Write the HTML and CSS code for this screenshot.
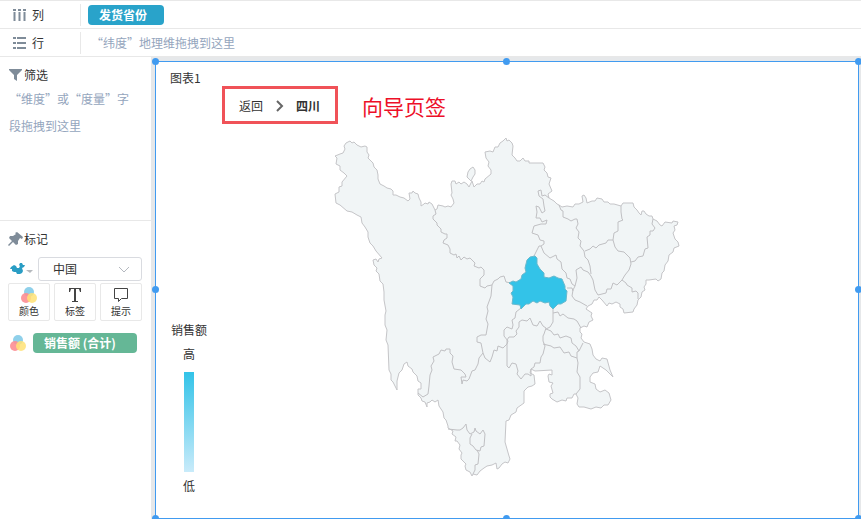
FILE: index.html
```html
<!DOCTYPE html>
<html lang="zh-CN">
<head>
  <meta charset="UTF-8" />
  <meta name="viewport" content="width=device-width, initial-scale=1.0" />
  <title>图表1</title>
  <link rel="stylesheet" href="styles.css">
</head>
<body>
  <header class="shelves">
    <div class="shelf">
      <div class="shelf-label">
        <svg class="shelf-icon" width="14" height="14" viewBox="0 0 14 14" fill="#7f8c99">
          <path d="M0 1h3v2H0zM5 1h3v2H5zM10 1h3v2h-3zM0.500 4h2v9h-2zM5.500 4h2v9h-2zM10.500 4h2v9h-2z"/>
        </svg>
        <span>列</span>
      </div>
      <div class="shelf-drop">
        <button type="button" class="pill pill-blue">发货省份</button>
      </div>
    </div>
    <div class="shelf">
      <div class="shelf-label">
        <svg class="shelf-icon" width="14" height="14" viewBox="0 0 14 14" fill="#7f8c99">
          <path d="M0 1h3v2H0zM0 6h3v2H0zM0 11h3v2H0zM4 1h9v2H4zM4 6h9v2H4zM4 11h9v2H4z"/>
        </svg>
        <span>行</span>
      </div>
      <div class="shelf-drop">
        <span class="placeholder">“纬度”地理维拖拽到这里</span>
      </div>
    </div>
  </header>

  <div class="workspace">
    <aside class="sidebar">
      <section class="filters">
        <h2 class="panel-title">
          <svg width="15" height="14" viewBox="0 0 15 14" fill="#7f8c99"><path d="M1 1h13v1L9 7v6l-3-2V7L1 2z"/></svg>
          <span>筛选</span>
        </h2>
        <p class="placeholder filter-drop">“维度”或“度量”字段拖拽到这里</p>
      </section>

      <section class="marks">
        <h2 class="panel-title">
          <svg width="15" height="14" viewBox="0 0 15 14" fill="#7f8c99"><path d="M9 0l6 5-1 2-2-1-2 3 0 3-2 1-3-3-4 4-1-1 4-4-3-3 1-2 3 0 3-2-1-1z"/></svg>
          <span>标记</span>
        </h2>

        <div class="mark-type">
          <button type="button" class="map-toggle" aria-label="地图类型">
            <svg width="24" height="14" viewBox="0 0 24 14">
              <path fill="#2a9dc4" d="M1 5l3-2 2 1 1 2 2 0 1-2-1-1 1-2 2 0 1 2 2 0-1 2-2 1 1 3-1 2-2 1-1 0-2 0-1-2-2 0-2-1 0-2-2 0z"/>
              <path fill="#b5b9be" d="M16 8h7l-3 3z"/>
            </svg>
          </button>
          <div class="select-box">
            <select aria-label="地图范围">
              <option>中国</option>
            </select>
            <svg class="select-arrow" width="12" height="8" viewBox="0 0 12 8" fill="none" stroke="#b4b8bf"><path d="M1 1l5 5 5-5"/></svg>
          </div>
        </div>

        <div class="mark-buttons">
          <button type="button">
            <svg width="18" height="18" viewBox="0 0 18 18">
              <circle cx="9" cy="6" r="5" fill="#8fd0ea"/>
              <circle cx="6" cy="12" r="5" fill="#fc8d92" fill-opacity=".9"/>
              <circle cx="12" cy="12" r="5" fill="#ffe275" fill-opacity=".85"/>
            </svg>
            <span>颜色</span>
          </button>
          <button type="button">
            <svg width="18" height="18" viewBox="0 0 18 18" fill="#444"><path d="M3 2h12v4h-1l-1-3h-3v12l2 0v1H6v-1l2 0V3H5L4 6H3z"/></svg>
            <span>标签</span>
          </button>
          <button type="button">
            <svg width="18" height="18" viewBox="0 0 18 18" fill="none" stroke="#444" stroke-linejoin="round"><path d="M2.500 2.500h13v10h-6l-3 3v-3h-4z"/></svg>
            <span>提示</span>
          </button>
        </div>

        <div class="mark-field">
          <svg width="18" height="18" viewBox="0 0 18 18">
            <circle cx="9" cy="6" r="5" fill="#8fd0ea"/>
            <circle cx="6" cy="12" r="5" fill="#fc8d92" fill-opacity=".9"/>
            <circle cx="12" cy="12" r="5" fill="#ffe275" fill-opacity=".85"/>
          </svg>
          <button type="button" class="pill pill-green">销售额 (合计)</button>
        </div>
      </section>
    </aside>

    <main class="canvas">
      <div class="chart">
        <h1 class="chart-title">图表1</h1>
        <div class="guide">
          <nav class="breadcrumb">
            <a href="#">返回</a>
            <svg width="9" height="12" viewBox="0 0 9 12" fill="none" stroke="#666" stroke-width="2"><path d="M2 1l5 5-5 5"/></svg>
            <strong>四川</strong>
          </nav>
          <span class="guide-note">向导页签</span>
        </div>

        <div class="plot">
          <div class="legend">
            <span class="legend-title">销售额</span>
            <span>高</span>
            <div class="legend-bar"></div>
            <span>低</span>
          </div>

          <svg class="map" viewBox="325 130 365 355" role="img" aria-label="四川">
            <!-- province outline -->
            <path class="area" d="M346 143L348 142 350 141 352 143 354 142 357 145 361 147 365 146 367 147 367 152 369 155 368 158 371 161 373 163 374 167 377 170 378 175 378 179 380 184 384 186 387 188 391 189 393 191 393 195 396 195 400 197 404 198 408 201 410 199 409 193 412 193 413 191 415 193 418 194 419 198 421 202 421 206 424 204 425 203 428 204 429 202 432 204 435 210 437 209 438 205 443 206 445 207 448 206 451 207 454 203 453 199 451 195 452 193 451 184 452 181 455 181 456 184 459 182 461 184 464 182 467 184 469 187 472 181 474 187 477 184 480 184 482 181 484 182 485 179 491 174 491 170 488 166 489 162 486 158 485 152 490 151 493 152 495 147 498 147 500 143 503 141 506 138 507 141 509 140 512 143 513 146 512 155 515 158 517 161 520 161 523 158 525 161 529 161 529 163 543 163 545 167 544 170 547 173 548 177 551 178 549 184 552 191 548 194 549 198 554 201 557 204 559 205 562 207 567 206 573 207 575 204 579 204 583 202 582 196 584 195 586 198 587 203 592 201 595 201 597 198 602 199 604 202 608 202 610 204 614 204 621 206 623 203 633 203 634 207 637 210 639 213 641 215 642 211 644 211 646 214 649 216 652 216 653 219 657 221 660 225 662 226 665 222 672 223 673 221 678 222 677 225 674 226 675 230 673 233 675 239 678 242 679 246 674 248 673 252 669 255 668 261 665 265 664 271 662 273 661 279 658 281 656 279 649 280 646 280 646 284 644 287 645 290 642 292 641 297 638 300 637 305 634 309 633 312 624 313 623 309 620 307 620 304 616 302 612 304 609 303 607 306 602 300 599 297 597 300 594 300 592 304 588 306 586 309 592 313 591 316 593 320 589 322 587 327 584 326 580 328 580 332 582 334 581 338 584 342 590 344 592 349 593 355 596 359 600 361 602 358 607 359 610 370 613 377 606 370 600 366 598 372 593 373 590 377 590 382 595 384 596 389 600 392 605 390 609 393 611 400 608 405 604 405 601 408 596 407 591 409 584 407 579 407 577 404 578 398 576 394 574 394 572 398 567 398 566 401 562 400 557 402 552 399 550 397 550 394 553 393 551 386 553 383 549 382 548 376 549 374 552 375 552 370 535 371 531 369 530 373 534 375 535 384 532 386 528 387 524 391 524 403 517 408 516 412 511 415 509 420 506 421 505 442 507 449 509 456 510 459 508 463 505 462 502 464 499 468 497 469 496 463 492 465 487 466 484 468 480 471 477 475 473 474 472 476 470 472 466 470 465 466 466 464 461 459 461 455 462 453 459 449 460 445 457 441 455 441 456 437 452 434 453 431 448 428 448 426 446 420 444 418 443 412 439 406 438 400 435 402 432 400 430 402 427 403 427 407 425 402 422 401 421 398 418 395 418 389 421 389 421 383 418 381 417 376 413 372 412 369 408 366 407 362 404 364 402 370 399 373 397 381 397 390 393 382 391 380 391 374 389 370 388 345 386 340 387 330 385 325 385 315 386 311 384 300 384 292 383 284 380 281 379 274 376 271 377 268 374 265 373 260 376 259 378 262 379 259 382 258 376 251 373 246 370 243 368 237 368 232 365 227 362 223 361 217 357 215 352 212 347 211 340 205 336 203 335 194 339 192 339 187 342 186 342 182 347 176 344 173 340 170 340 166 336 164 337 158 335 156 340 154 343 153 345 149 344 146z"/>
            <path class="area" d="M473 167L470 169 468 172 467 177 471 181 473 177 475 174 475 170z"/>

            <!-- city borders -->
            <g class="border">
              <path d="M435 210L436 214 433 216 433 219 437 223 437 225 441 229 441 232 445 234 447 234 447 238 444 240 443 243 448 245 450 249 450 253 454 255 456 254 457 258 459 256 461 260 464 257 467 259 470 258 475 263 474 266 479 268 481 267 484 270 484 275 480 279 480 286 485 288 487 286 492 285 494 281 498 279 500 277 504 276 506 282 511 283"/>
              <path d="M492 285L491 296 487 307 488 311 486 319 488 324 486 335 481 335 477 337 477 342 481 343 483 353 479 358 478 364 475 370 472 371 469 379 467 381 463 380 462 384 461 377 466 377 465 374 461 370 454 369 452 362 453 356 450 353 450 349 446 349 445 351 441 350 439 354 433 357 434 361 431 366 432 370 430 375 429 386 428 394 423 397 418 393"/>
              <path d="M483 353L485 358 490 362 492 357 494 350 497 351 498 346 503 348 507 344 508 341 504 336 504 330 507 327 512 329 513 325 512 320 515 318 516 312 521 308"/>
              <path d="M507 340L509 337 514 337 517 334 516 331 519 327 519 322 522 320 527 321 530 318 533 325 537 326 540 321 543 326 546 328 544 334 543 336 543 341 545 346 543 354 541 357 540 363 535 363 534 367 531 369 531 376 528 374 525 374 521 379 517 374 518 371 516 364 512 363 509 368 507 366 507 347z"/>
              <path d="M553 309L553 322 550 327 546 329"/>
              <path d="M553 313L558 312 560 316 563 314 568 318 574 319 577 321 581 328"/>
              <path d="M546 329L551 331 554 335 558 334 560 338 566 336 571 338 572 343 576 346 579 351 583 343"/>
              <path d="M543 344L551 346 554 348 560 347 564 353 569 352 571 356 577 358 577 352 579 351"/>
              <path d="M577 358L578 363 577 372 580 377 580 389 576 394"/>
              <path d="M549 198L545 195 542 196 541 190 538 191 539 196 543 199 544 206 545 211 542 213 539 207 536 206 537 212 536 218 540 218 542 222 547 220 546 224 541 224 534 226 532 233 538 235 540 240 544 241 544 244 541 246 539 246 534 256"/>
              <path d="M541 246L544 253 550 258 556 255 557 259 561 262 562 269 566 273 567 278 570 279 572 284 575 286 577 278 576 270 581 267 583 270 588 272 591 276 593 280 595 290 598 295"/>
              <path d="M559 205L561 210 563 211 563 217 568 219 571 221 575 219 577 219 578 224 576 228 579 232 578 238 581 241 580 246 584 251 585 257 588 260 590 266 591 274"/>
              <path d="M621 206L621 212 622 219 623 220 618 222 618 231 614 233 613 240 608 240 606 243 599 245 596 248 593 246 590 249 585 251"/>
              <path d="M613 240L615 247 618 251 624 252 627 255 630 258 631 264 629 270 625 275 622 280 617 285 613 283 611 289 607 289 606 293 598 295"/>
              <path d="M653 219L652 224 655 228 653 231 650 231 650 235 647 237 648 248 645 249 643 256 638 257 635 261 631 262"/>
              <path d="M622 280L626 283 627 285 632 288 632 292 636 291 638 293 638 299"/>
              <path d="M575 286L573 290 572 296 575 300 580 302 587 306M567 288L572 288 573 291"/>
              <path d="M448 429L457 430 460 430 463 428 466 424 467 430 470 434 474 432 475 428 476 431 480 434 483 430 485 434 484 446 481 447 480 451 476 450 473 446 470 444 470 438 472 434M477 450L479 454 478 464 475 465 475 470 473 474"/>
            </g>

            <!-- Chengdu -->
            <path class="area-active" d="M509 283L513 281 516 282 521 279 522 275 526 272 525 268 527 260 530 257 535 256 537 258 537 264 540 269 544 273 544 277 549 278 554 276 558 278 562 279 565 286 565 289 567 291 566 301 561 304 558 304 553 309 550 306 549 302 545 303 540 301 537 303 533 301 529 304 526 304 521 309 520 305 512 304 513 297 511 293 513 291 513 286z"/>
          </svg>
        </div>

        <i class="handle top left"></i>
        <i class="handle top center"></i>
        <i class="handle top right"></i>
        <i class="handle middle left"></i>
        <i class="handle middle right"></i>
        <i class="handle bottom left"></i>
        <i class="handle bottom center"></i>
        <i class="handle bottom right"></i>
      </div>
    </main>
  </div>
</body>
</html>
```
FILE: styles.css
```css
:root {
  --text: #333;
  --muted: #94a5bd;
  --line: #e8e8e8;
  --gutter: #e6e8ea;
  --select: #419bf0;
  --blue: #29a3ca;
  --green: #65b796;
  --cyan: #33c3e8;
  --mark: #f05258;
}

* {
  box-sizing: border-box;
}

body {
  margin: 0;
  height: 100vh;
  display: flex;
  flex-direction: column;
  overflow: hidden;
  font-family: "Noto Sans CJK SC", sans-serif;
  font-size: 12px;
  line-height: 16px;
  color: var(--text);
  background: #fff;
}

button,
select {
  font: inherit;
  color: inherit;
  cursor: pointer;
}

h1,
h2,
p {
  margin: 0;
  font-size: 12px;
  font-weight: 400;
}

svg {
  display: block;
  flex: none;
}

/* shelves */
.shelves {
  border-top: 1px solid var(--line);
}

.shelf {
  display: flex;
  align-items: center;
  height: 28px;
  border-bottom: 1px solid var(--line);
}

.shelf-label {
  display: flex;
  align-items: center;
  gap: 5px;
  width: 81px;
  height: 22px;
  padding-left: 13px;
  border-right: 1px solid var(--line);
}

.shelf-drop {
  padding-left: 7px;
}

.shelf-drop .placeholder {
  padding-left: 3px;
}

.placeholder {
  color: var(--muted);
}

.pill {
  height: 20px;
  padding: 0 11px;
  border: none;
  border-radius: 4px;
  color: #fff;
  font-weight: 700;
  line-height: 20px;
  text-align: left;
}

.pill-blue {
  display: block;
  min-width: 76px;
  background: var(--blue);
}

.pill-green {
  flex: 1;
  background: var(--green);
}

/* sidebar */
.workspace {
  flex: 1;
  min-height: 0;
  display: flex;
}

.sidebar {
  width: 151px;
  flex: none;
}

.filters {
  height: 164px;
  padding: 10px 8px;
  border-bottom: 1px solid var(--line);
}

.panel-title {
  display: flex;
  align-items: center;
  gap: 1px;
}

.filter-drop {
  margin-top: 2px;
  padding: 0 12px 0 1px;
  line-height: 27px;
}

.marks {
  padding: 10px 9px 10px 8px;
}

.mark-type {
  display: flex;
  align-items: center;
  gap: 4px;
  margin-top: 10px;
}

.map-toggle {
  padding: 0 0 0 2px;
  border: none;
  background: none;
}

.select-box {
  position: relative;
  flex: 1;
}

.select-box select {
  display: block;
  width: 100%;
  height: 24px;
  padding: 0 14px;
  border: 1px solid #d9dbe0;
  border-radius: 3px;
  background: #fff;
  appearance: none;
}

.select-arrow {
  position: absolute;
  top: 9px;
  right: 12px;
  pointer-events: none;
}

.mark-buttons {
  display: grid;
  grid-template-columns: repeat(3, 1fr);
  gap: 4px;
  margin-top: 2px;
}

.mark-buttons button {
  display: flex;
  flex-direction: column;
  align-items: center;
  height: 38px;
  padding: 2px 0 0;
  border: 1px solid var(--line);
  border-radius: 2px;
  background: #fff;
  font-size: 10px;
  line-height: 14px;
}

.mark-field {
  display: flex;
  align-items: center;
  gap: 6px;
  margin-top: 12px;
  padding: 0 5px 0 1px;
}

/* chart */
.canvas {
  flex: 1;
  display: flex;
  padding: 4px 2px 0 4px;
  background: var(--gutter);
}

.chart {
  position: relative;
  flex: 1;
  display: flex;
  flex-direction: column;
  padding: 8px 14px 0;
  border: 1px solid var(--select);
  background: #fff;
}

.guide {
  display: flex;
  align-items: center;
  gap: 24px;
  margin-left: 52px;
}

.breadcrumb {
  display: flex;
  align-items: center;
  gap: 12px;
  height: 38px;
  padding: 2px 15px 0 14px;
  border: 3px solid var(--mark);
}

.breadcrumb a {
  color: var(--text);
  text-decoration: none;
}

.guide-note {
  padding-top: 2px;
  font-size: 21px;
  line-height: 28px;
  color: #ed0f28;
}

.plot {
  flex: 1;
  min-height: 0;
  display: grid;
  grid-template-columns: 38px 1fr 38px;
}

.legend {
  align-self: end;
  display: flex;
  flex-direction: column;
  align-items: center;
  padding-bottom: 20px;
  line-height: 24px;
}

.legend-bar {
  width: 10px;
  height: 100px;
  margin: 6px 0 2px;
  background: linear-gradient(var(--cyan), #c9ebfa);
}

.legend-title {
  white-space: nowrap;
}

.map {
  width: 100%;
  max-width: 365px;
  margin: 6px auto 0;
}

.area {
  fill: #f1f5f6;
  stroke: #c5c5c8;
}

.border {
  fill: none;
  stroke: #c0c0c3;
}

.area-active {
  fill: var(--cyan);
  stroke: #69b9cd;
}

/* resize handles on the selected chart */
.handle {
  position: absolute;
  width: 7px;
  height: 7px;
  border-radius: 50%;
  background: var(--select);
}

.top { top: -4px; }
.middle { top: calc(50% - 4px); }
.bottom { bottom: -4px; }
.left { left: -4px; }
.center { left: calc(50% - 4px); }
.right { right: -4px; }
```
